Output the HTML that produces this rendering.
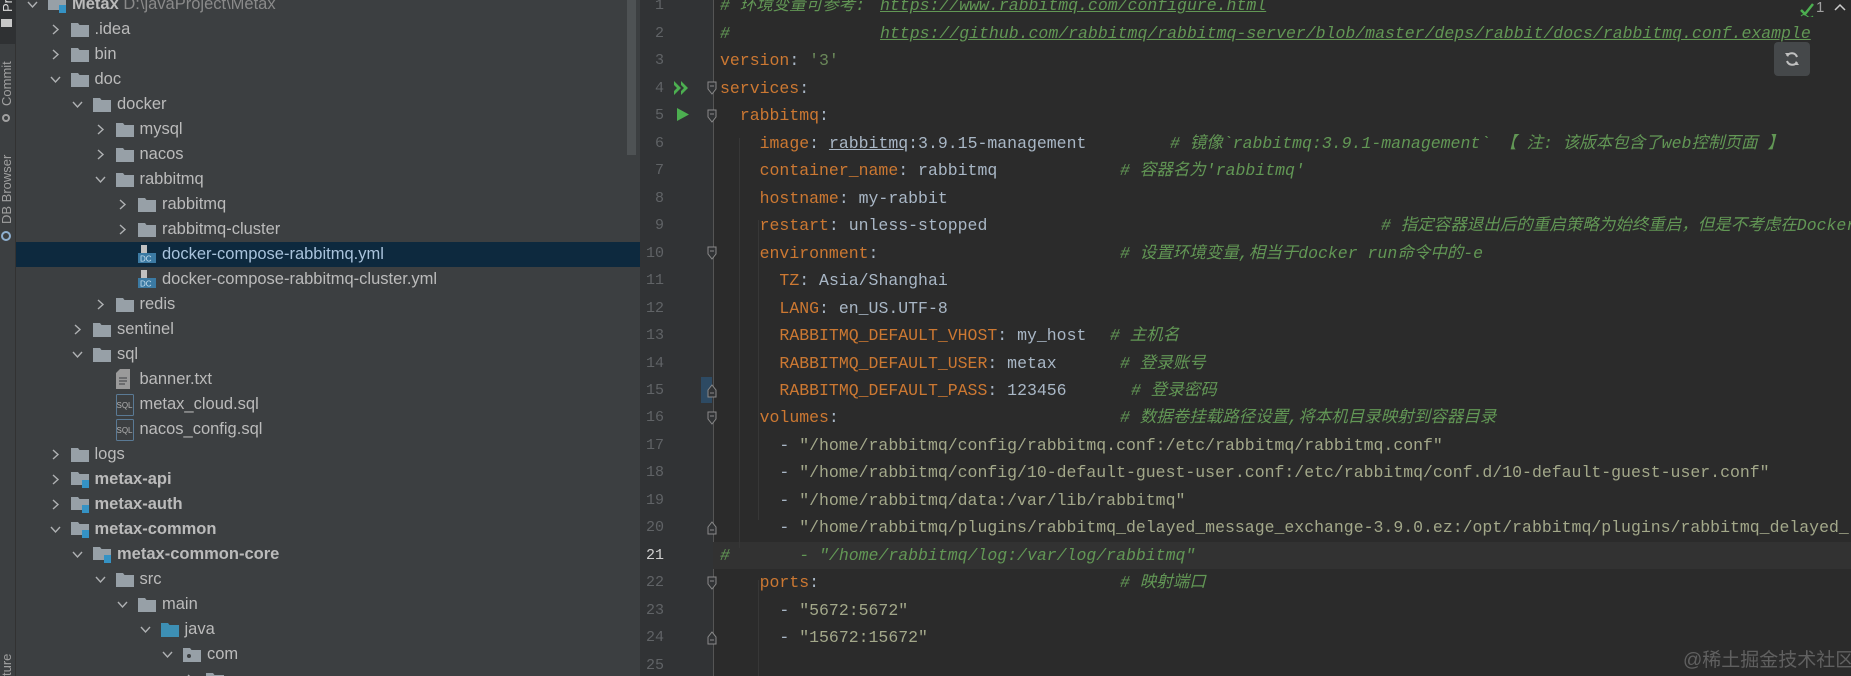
<!DOCTYPE html>
<html style="overflow:hidden;width:1851px;height:676px"><head><meta charset="utf-8">
<style>
*{margin:0;padding:0;box-sizing:border-box}
html,body{overflow:hidden}
body{width:1851px;height:676px;background:#2b2b2b;position:relative;font-family:"Liberation Sans","Noto Sans CJK SC",sans-serif}
#wrap{position:absolute;left:0;top:0;width:1851px;height:676px;overflow:hidden}
#strip{position:absolute;left:0;top:0;width:16px;height:676px;background:#3c3f41;border-right:1px solid #323232}
#striptop{position:absolute;left:0;top:0;width:16px;height:44px;background:#2f3133}
.vt{position:absolute;color:#a0a0a0;font-size:13px;transform:rotate(-90deg);transform-origin:left top;white-space:nowrap}
#tree{position:absolute;left:16px;top:0;width:624px;height:676px;background:#3c3f41;overflow:hidden}
.row{position:absolute;left:0;width:624px;height:25px;color:#bbbbbb;font-size:16.5px;line-height:25px;white-space:nowrap}
.row.sel{background:#0d293e;color:#a9c3dc}
.chev{position:absolute;top:7px;width:11px;height:11px}
.ic{position:absolute;top:5px}
.tx{position:absolute;top:0}
.b{font-weight:bold}
#sb{position:absolute;left:611px;top:0;width:9px;height:155px;background:#4e5254}
#gutter{position:absolute;left:640px;top:0;width:73px;height:676px;background:#313335}
.ln{position:absolute;left:640px;width:24px;text-align:right;font-family:"Liberation Mono",monospace;font-size:15px;color:#606366;line-height:27.48px}
.cl{position:absolute;left:720px;font-family:"Liberation Mono","Noto Sans CJK SC",monospace;font-size:16.5px;line-height:27.48px;white-space:pre;color:#a9b7c6}
.k{color:#cc7832}
.s{color:#6a8759}
.q{color:#a3a88a}
.c{color:#629755;font-style:italic}
.u{text-decoration:underline}
.cm{position:absolute;font-family:"Liberation Mono","Noto Sans CJK SC",monospace;font-size:16.5px;line-height:27.48px;white-space:pre;color:#629755;font-style:italic}
.fold{position:absolute;left:707px;width:10px;height:14px}
.guide{position:absolute;width:1px;background:#373737}
</style></head><body><div id="wrap">
<div id="strip"></div><div id="striptop"></div>
<div class="vt" style="left:0;top:12px;color:#ddd">Pr</div>
<div style="position:absolute;left:1px;top:19px;width:11px;height:8px;background:#c8c8c8"></div>
<div class="vt" style="left:-1px;top:106px">Commit</div>
<div style="position:absolute;left:2px;top:114px;width:8px;height:8px;border:2px solid #a0a0a0;border-radius:50%"></div>
<div class="vt" style="left:-1px;top:224px">DB Browser</div>
<div style="position:absolute;left:1px;top:231px;width:10px;height:10px;border:2px solid #8fb0d0;border-radius:50%"></div>
<div class="vt" style="left:-1px;top:676px">ture</div>

<div id="tree">
<svg width="0" height="0" style="position:absolute"><defs>
<symbol id="cr" viewBox="0 0 11 11"><path d="M3 1 L8 5.5 L3 10" fill="none" stroke="#afb1b3" stroke-width="1.4"/></symbol>
<symbol id="cd" viewBox="0 0 11 11"><path d="M1 3 L5.5 8 L10 3" fill="none" stroke="#afb1b3" stroke-width="1.4"/></symbol>
<symbol id="fd" viewBox="0 0 18 15"><path d="M0 1 H7 L8.5 3 H18 V15 H0 Z" fill="#aeb9c0" opacity="0.8"/></symbol>
<symbol id="fj" viewBox="0 0 18 15"><path d="M0 1 H7 L8.5 3 H18 V15 H0 Z" fill="#3d8fb4"/></symbol>
<symbol id="fm" viewBox="0 0 20 17"><path d="M0 1 H7 L8.5 3 H18 V14 H0 Z" fill="#aeb9c0" opacity="0.8"/><rect x="11" y="9" width="7" height="8" fill="#3592c4"/></symbol>
<symbol id="fp" viewBox="0 0 18 15"><path d="M0 1 H7 L8.5 3 H18 V15 H0 Z" fill="#aeb9c0" opacity="0.8"/><circle cx="6" cy="9" r="2" fill="#3c3f41"/></symbol>
<symbol id="dc" viewBox="0 0 18 18"><path d="M3 0 H9 V8 H3 Z" fill="#c0c0c0"/><rect x="0" y="8" width="18" height="10" fill="#3b7aa3"/><text x="2" y="16.5" font-size="8" fill="#c8e0f0" font-family="Liberation Sans">DC</text></symbol>
<symbol id="sq" viewBox="0 0 18 22"><rect x="0.5" y="0.5" width="17" height="21" rx="1" fill="none" stroke="#5a7a95" stroke-width="1"/><text x="0.5" y="14" font-size="8" fill="#b0b0b0" font-family="Liberation Sans">SQL</text></symbol>
<symbol id="tx" viewBox="0 0 14 20"><path d="M4 0 H14 V20 H0 V4 Z" fill="#9a9a9a"/><path d="M3 9H11M3 12H11M3 15H9" stroke="#3c3f41"/></symbol>
</defs></svg>
<div id="sb"></div>
</div>

<div id="gutter"></div>
<div style="position:absolute;left:713px;top:0;width:1px;height:676px;background:#555"></div>
<div style="position:absolute;left:713px;top:542px;width:1138px;height:27px;background:#323232"></div>
<div style="position:absolute;left:701px;top:377px;width:11px;height:26px;background:#2d4a63"></div>
<div class="guide" style="left:739px;top:138px;height:410px"></div>
<div class="guide" style="left:758px;top:220px;height:150px"></div>
<div class="guide" style="left:758px;top:360px;height:160px"></div>
<div class="guide" style="left:758px;top:580px;height:96px"></div>

<svg style="position:absolute;left:672px;top:80px" width="20" height="16"><path d="M2 1 L9 8 L2 15 L2 11 L5 8 L2 5Z M9 1 L16 8 L9 15 L9 11 L12 8 L9 5Z" fill="#4caf50"/></svg>
<svg style="position:absolute;left:676px;top:107px" width="14" height="15"><path d="M1 1 L13 7.5 L1 14Z" fill="#4caf50"/></svg>

<div style="position:absolute;left:1774px;top:42px;width:36px;height:34px;background:#45484a;border-radius:4px"></div>
<svg style="position:absolute;left:1784px;top:51px" width="16" height="16"><path d="M13 6 A5.5 5.5 0 0 0 3 5 M3 10 A5.5 5.5 0 0 0 13 11" fill="none" stroke="#c0c0c0" stroke-width="2"/><path d="M1 2 L4 6 L6 2Z M15 14 L12 10 L10 14Z" fill="#c0c0c0"/></svg>
<svg style="position:absolute;left:1800px;top:3px" width="14" height="14"><path d="M1 7 L5 11 L13 1" fill="none" stroke="#4caf50" stroke-width="2.5"/><path d="M1 13 Q4 10 7 13 T13 13" stroke="#4caf50" fill="none"/></svg>
<div style="position:absolute;left:1816px;top:0;color:#a0a0a0;font-size:15px;line-height:16px">1</div>
<svg style="position:absolute;left:1834px;top:3px" width="12" height="8"><path d="M1 7 L6 2 L11 7" fill="none" stroke="#ccc" stroke-width="1.5"/></svg>

<div id="code"></div>
<div style="position:absolute;left:1683px;top:645px;color:#606060;font-size:19px;white-space:nowrap;font-family:'Liberation Sans','Noto Sans CJK SC',sans-serif">@稀土掘金技术社区</div>
</div>
<script>
(function(){
var rows=[
[0,'d','fm','<span class="b">Metax</span> <span style="color:#8a8a8a">D:\\javaProject\\Metax</span>'],
[1,'r','fd','.idea'],[1,'r','fd','bin'],[1,'d','fd','doc'],[2,'d','fd','docker'],
[3,'r','fd','mysql'],[3,'r','fd','nacos'],[3,'d','fd','rabbitmq'],[4,'r','fd','rabbitmq'],[4,'r','fd','rabbitmq-cluster'],
[4,'','dc','docker-compose-rabbitmq.yml',1],[4,'','dc','docker-compose-rabbitmq-cluster.yml'],
[3,'r','fd','redis'],[2,'r','fd','sentinel'],[2,'d','fd','sql'],
[3,'','tx','banner.txt'],[3,'','sq','metax_cloud.sql'],[3,'','sq','nacos_config.sql'],
[1,'r','fd','logs'],[1,'r','fm','<span class="b">metax-api</span>'],[1,'r','fm','<span class="b">metax-auth</span>'],
[1,'d','fm','<span class="b">metax-common</span>'],[2,'d','fm','<span class="b">metax-common-core</span>'],
[3,'d','fd','src'],[4,'d','fd','main'],[5,'d','fj','java'],[6,'d','fp','com'],[7,'r','fd','']];
var t=document.getElementById('tree'),h='';
rows.forEach(function(r,i){
 var lv=r[0],top=4+25*i-12.5;
 var cx=32+22.5*lv-16,ix=48+22.5*lv-16,tx=72+22.5*lv-16;
 h+='<div class="row'+(r[4]?' sel':'')+'" style="top:'+top+'px">';
 if(r[1])h+='<svg class="chev" style="left:'+(cx-5)+'px"><use href="#c'+r[1]+'"/></svg>';
 var w=18,hh=15,y=5;
 if(r[2]=='fm'){w=20;hh=17;y=4}
 if(r[2]=='dc'){hh=18;y=3}
 if(r[2]=='sq'){hh=22;w=18;y=2}
 if(r[2]=='tx'){w=14;hh=20;y=2}
 h+='<svg class="ic" style="left:'+ix+'px;top:'+y+'px" width="'+w+'" height="'+hh+'"><use href="#'+r[2]+'"/></svg>';
 h+='<span class="tx" style="left:'+tx+'px">'+r[3]+'</span></div>';
});
t.insertAdjacentHTML('beforeend',h);
var L=[
'<span class="c"># 环境变量可参考:  </span>',
'<span class="c">#</span>',
'<span class="k">version</span>: <span class="s">\'3\'</span>',
'<span class="k">services</span>:',
'  <span class="k">rabbitmq</span>:',
'    <span class="k">image</span>: <span class="u">rabbitmq</span>:3.9.15-management',
'    <span class="k">container_name</span>: rabbitmq',
'    <span class="k">hostname</span>: my-rabbit',
'    <span class="k">restart</span>: unless-stopped',
'    <span class="k">environment</span>:',
'      <span class="k">TZ</span>: Asia/Shanghai',
'      <span class="k">LANG</span>: en_US.UTF-8',
'      <span class="k">RABBITMQ_DEFAULT_VHOST</span>: my_host',
'      <span class="k">RABBITMQ_DEFAULT_USER</span>: metax',
'      <span class="k">RABBITMQ_DEFAULT_PASS</span>: 123456',
'    <span class="k">volumes</span>:',
'      - <span class="q">"/home/rabbitmq/config/rabbitmq.conf:/etc/rabbitmq/rabbitmq.conf"</span>',
'      - <span class="q">"/home/rabbitmq/config/10-default-guest-user.conf:/etc/rabbitmq/conf.d/10-default-guest-user.conf"</span>',
'      - <span class="q">"/home/rabbitmq/data:/var/lib/rabbitmq"</span>',
'      - <span class="q">"/home/rabbitmq/plugins/rabbitmq_delayed_message_exchange-3.9.0.ez:/opt/rabbitmq/plugins/rabbitmq_delayed_</span>',
'<span class="c">#       - "/home/rabbitmq/log:/var/log/rabbitmq"</span>',
'    <span class="k">ports</span>:',
'      - <span class="q">"5672:5672"</span>',
'      - <span class="q">"15672:15672"</span>',
''];
var C={1:[880,'<span class="u">https://www.rabbitmq.com/configure.html</span>'],2:[880,'<span class="u">https://github.com/rabbitmq/rabbitmq-server/blob/master/deps/rabbit/docs/rabbitmq.conf.example</span>'],
6:[1170,'# 镜像`rabbitmq:3.9.1-management` 【 注: 该版本包含了web控制页面 】'],7:[1120,'# 容器名为\'rabbitmq\''],
9:[1381,'# 指定容器退出后的重启策略为始终重启，但是不考虑在Docker守'],10:[1120,'# 设置环境变量,相当于docker run命令中的-e'],
13:[1110,'# 主机名'],14:[1120,'# 登录账号'],15:[1131,'# 登录密码'],16:[1120,'# 数据卷挂载路径设置,将本机目录映射到容器目录'],22:[1120,'# 映射端口']};
var g='';
for(var i=1;i<=25;i++){
 var top=6+(i-1)*27.48-13.74;
 g+='<div class="ln" style="top:'+top+'px;'+(i==21?'color:#d0d0d0':'')+'">'+i+'</div>';
 g+='<div class="cl" style="top:'+top+'px">'+L[i-1]+'</div>';
 if(C[i])g+='<div class="cm" style="left:'+C[i][0]+'px;top:'+top+'px">'+C[i][1]+'</div>';
}
[[4,0],[5,0],[10,0],[16,0],[22,0],[15,1],[20,1],[24,1]].forEach(function(f){
 var top=6+(f[0]-1)*27.48-7;
 var d=f[1]?'M1 13 V6 L5 1 L9 6 V13Z':'M1 1 H9 V8 L5 13 L1 8Z';
 g+='<svg class="fold" style="top:'+top+'px" width="10" height="14"><path d="'+d+'" fill="#313335" stroke="#8a8a8a"/><path d="M3 '+(f[1]?9:5)+' H7" stroke="#8a8a8a"/></svg>';
});
document.getElementById('code').innerHTML=g;
})();
</script>
</body></html>
